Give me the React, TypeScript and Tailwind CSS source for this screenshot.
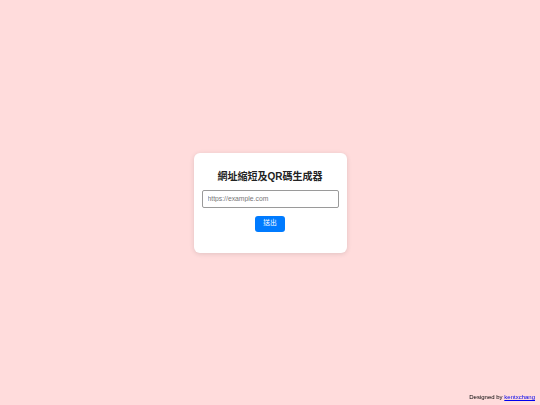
import React from "react";

export default function App() {
  return (
    <div
      className="relative flex h-screen w-full items-center justify-center bg-[#ffdcdc]"
      style={{ fontFamily: '"Liberation Sans", "Noto Sans CJK TC", sans-serif' }}
    >
      <div className="flex w-[153px] flex-col items-center rounded-[6px] bg-white px-[8px] pt-[17px] pb-[21px] shadow-[0_1px_5px_rgba(0,0,0,0.12)]">
        <h2 className="text-[10px] font-bold leading-[13px] text-[#222]">網址縮短及QR碼生成器</h2>
        <input
          type="text"
          placeholder="https://example.com"
          className="mt-[7px] h-[18px] w-[137px] rounded-[2px] border border-[#9a9a9a] bg-white px-[5px] text-[6.8px] text-[#333] placeholder:text-[#777] outline-none"
        />
        <button className="mt-[8px] flex h-[16px] w-[30px] items-center justify-center rounded-[3px] bg-[#007bff] text-[6.8px] text-white">
          送出
        </button>
      </div>
      <div className="fixed right-[5px] bottom-[4px] text-[6px] leading-[8px] text-black">
        Designed by <a href="#" className="text-[#0000ee] underline">kentxchang</a>
      </div>
    </div>
  );
}
